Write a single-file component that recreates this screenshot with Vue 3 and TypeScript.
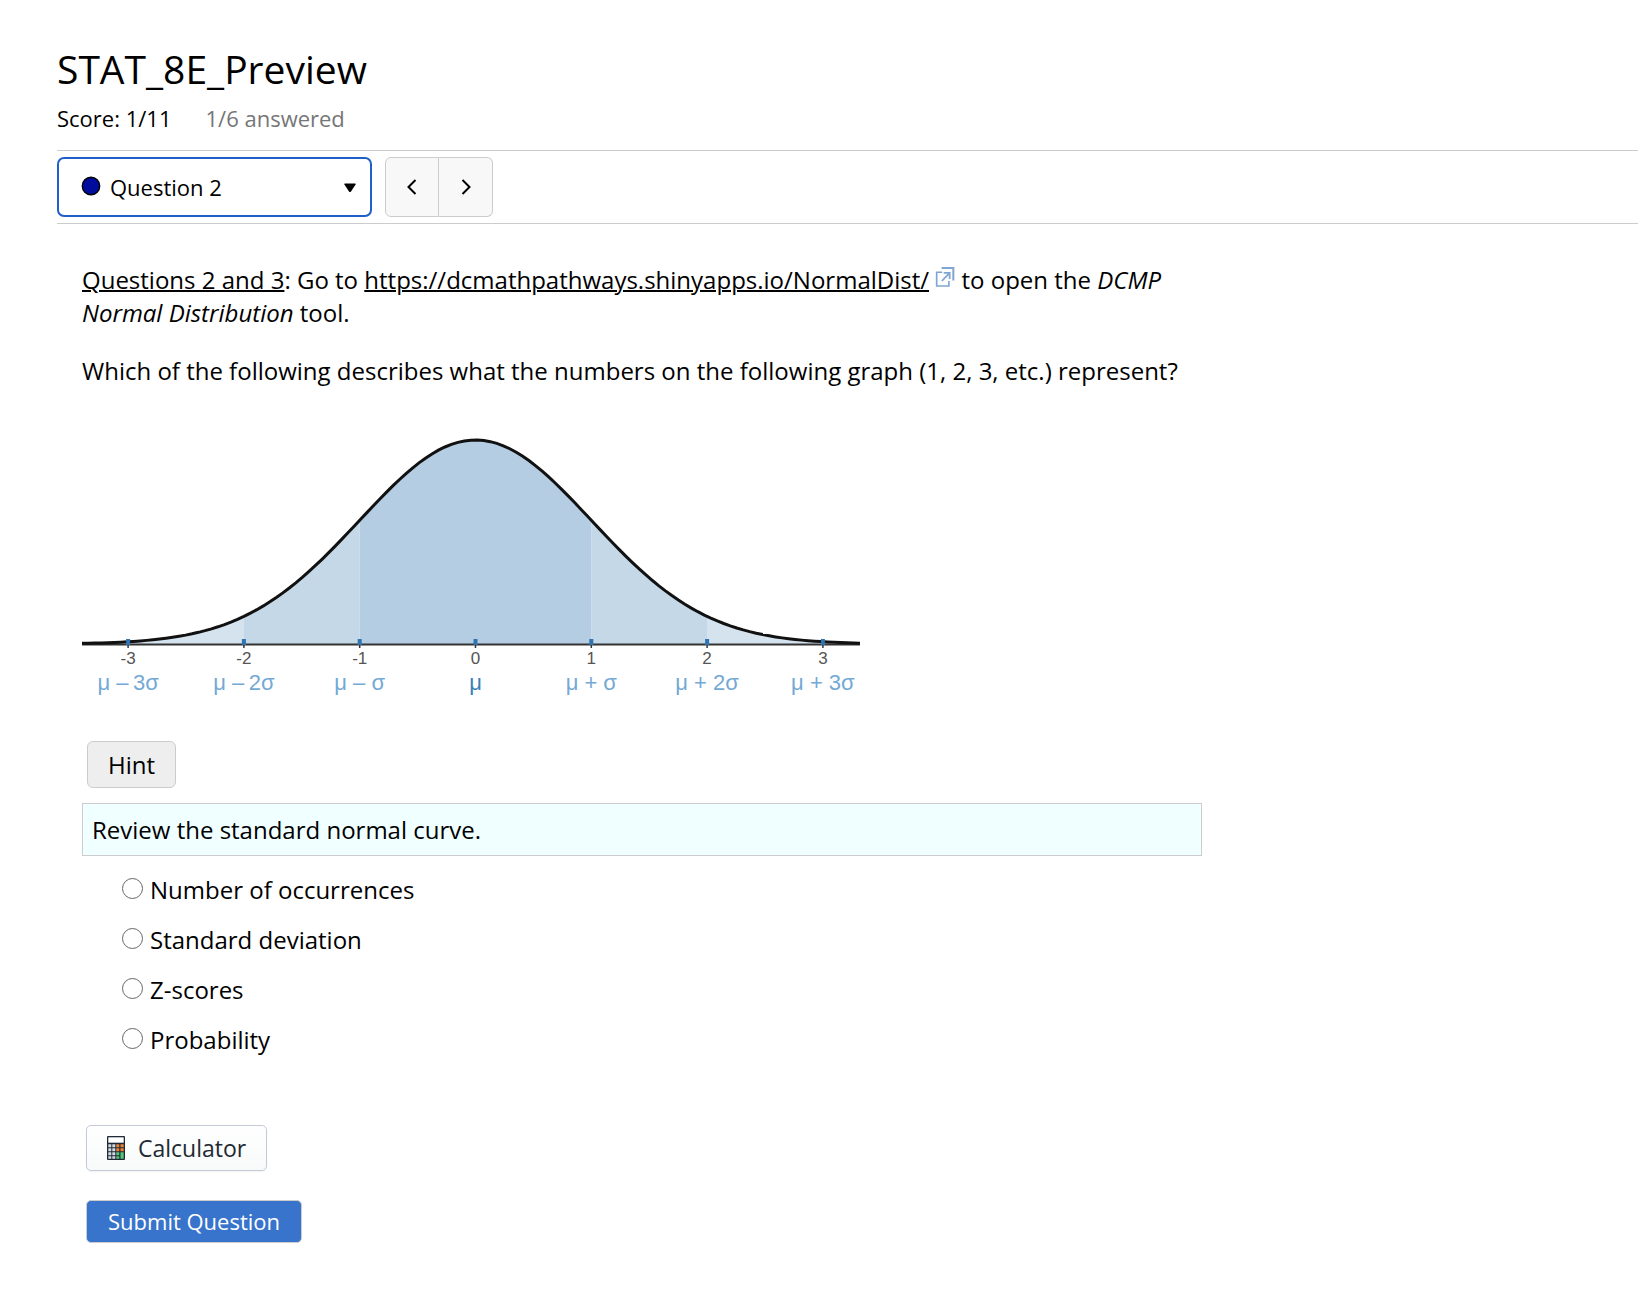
<script setup lang="ts">
import { ref } from 'vue'

interface Tick {
  value: number
  label: string
}

const questions = [1, 2, 3, 4, 5, 6]
const current = ref(2)
const answer = ref('')
const hintOpen = ref(true)
const options = ['Number of occurrences', 'Standard deviation', 'Z-scores', 'Probability']

const ticks: Tick[] = [
  { value: -3, label: 'μ –\u20093σ' },
  { value: -2, label: 'μ –\u20092σ' },
  { value: -1, label: 'μ – σ' },
  { value: 0, label: 'μ' },
  { value: 1, label: 'μ + σ' },
  { value: 2, label: 'μ + 2σ' },
  { value: 3, label: 'μ + 3σ' },
]

// Chart geometry, in viewBox units
const centre = 393.5
const sigma = 115.8
const base = 225
const peak = 204

const toX = (z: number): number => centre + z * sigma
const toY = (z: number): number => base - peak * Math.exp((-z * z) / 2)

function curve(from: number, to: number): string {
  const steps = 120
  const points: string[] = []
  for (let i = 0; i <= steps; i++) {
    const z = from + ((to - from) * i) / steps
    points.push(`${toX(z).toFixed(2)} ${toY(z).toFixed(2)}`)
  }
  return 'M' + points.join('L')
}

function area(from: number, to: number): string {
  return `${curve(from, to)}L${toX(to)} ${base}L${toX(from)} ${base}Z`
}

function step(delta: number): void {
  current.value = Math.min(questions.length, Math.max(1, current.value + delta))
}
</script>

<template>
  <main class="page">
    <header>
      <h1>STAT_8E_Preview</h1>
      <p class="score">
        <span>Score: 1/11</span>
        <span class="answered">1/6 answered</span>
      </p>
    </header>

    <nav class="bar" aria-label="Question navigation">
      <div class="picker">
        <svg class="dot" viewBox="0 0 20 20" aria-hidden="true">
          <circle cx="10" cy="10" r="8.7" fill="#000d9c" stroke="#000" stroke-width="1.4" />
        </svg>
        <select v-model="current" aria-label="Question">
          <option v-for="q in questions" :key="q" :value="q">Question {{ q }}</option>
        </select>
        <svg class="caret" viewBox="0 0 12 10" aria-hidden="true">
          <path d="M1 .5h10q1 0 .6 1L7 8.5q-1 1.200-2 0L.4 1.500Q0 .5 1 .5z" />
        </svg>
      </div>
      <div class="steps">
        <button type="button" aria-label="Previous question" @click="step(-1)">
          <svg viewBox="0 0 20 20" aria-hidden="true"><path d="M13.500 3 6.500 10l7 7" /></svg>
        </button>
        <button type="button" aria-label="Next question" @click="step(1)">
          <svg viewBox="0 0 20 20" aria-hidden="true"><path d="M6.500 3l7 7-7 7" /></svg>
        </button>
      </div>
    </nav>

    <section class="question">
      <p>
        <u>Questions 2 and 3</u>: Go to
        <a href="https://dcmathpathways.shinyapps.io/NormalDist/">https://dcmathpathways.shinyapps.io/NormalDist/</a>{{ ' ' }}
        <svg class="external" viewBox="0 0 18 18" aria-hidden="true">
          <g fill="none" stroke="#7fa6d3">
            <path d="M6 .9h10.500v11.200" stroke-width="1.800" />
            <path d="M6.500 4.700H1.500v12.400h11v-4.500" stroke-width="1.500" />
            <path d="M6.200 12.600 12.300 6.200M7.800 5.300h5.400v5.400" stroke-width="1.600" />
          </g>
        </svg>
        to open the <em>DCMP Normal Distribution</em> tool.
      </p>
      <p>Which of the following describes what the numbers on the following graph (1, 2, 3, etc.) represent?</p>

      <svg class="chart" viewBox="0 0 778 290" role="img" aria-label="Standard normal curve">
        <path :d="area(-3, -2)" fill="#d5e3ef" />
        <path :d="area(2, 3)" fill="#d5e3ef" />
        <path :d="area(-2, -1)" fill="#c5d8e7" />
        <path :d="area(1, 2)" fill="#c5d8e7" />
        <path :d="area(-1, 1)" fill="#b5cde2" />
        <path d="M0 225.500H778" stroke="#333" stroke-width="2" />
        <path :d="curve(-3.4, 3.32)" fill="none" stroke="#111" stroke-width="3" />
        <g v-for="t in ticks" :key="t.value">
          <path :d="`M${toX(t.value)} 224v5`" stroke="#333" stroke-width="1.500" />
          <path :d="`M${toX(t.value)} 220v6`" stroke="#2f74b0" stroke-width="4" />
          <text class="tick" :x="toX(t.value)" y="245">{{ t.value }}</text>
          <text class="mu" :class="{ mean: t.value === 0 }" :x="toX(t.value)" y="271">{{ t.label }}</text>
        </g>
      </svg>

      <button class="hint" type="button" @click="hintOpen = !hintOpen">Hint</button>
      <div v-if="hintOpen" class="hint-text">Review the standard normal curve.</div>

      <ul class="options">
        <li v-for="o in options" :key="o">
          <label><input v-model="answer" type="radio" name="answer" :value="o" />{{ o }}</label>
        </li>
      </ul>

      <div class="actions">
        <button class="calculator" type="button">
          <svg viewBox="0 0 18 24" aria-hidden="true">
            <rect width="18" height="24" rx="1" fill="#1f2a36" />
            <rect x="1.300" y="1.300" width="15.400" height="5.400" fill="#fff" />
            <g fill="#d5dae2">
              <path d="M1.300 8.300h3v3h-3zM5.300 8.300h3v3h-3zM1.300 12.300h3v3h-3zM5.300 12.300h3v3h-3zM1.300 16.300h3v3h-3zM5.300 16.300h3v3h-3zM1.300 20.300h3v2.500h-3zM5.300 20.300h3v2.500h-3z" />
            </g>
            <path d="M9.300 8.300h3v3h-3zM13.500 8.300h3.200v3h-3.200zM9.300 12.300h3v3h-3zM13.500 12.300h3.200v3h-3.200z" fill="#ee8433" />
            <path d="M9.300 16.300h3v3h-3zM9.300 20.300h3v2.500h-3zM13.500 16.300h3.200v6.500h-3.200z" fill="#52c878" />
          </svg>
          Calculator
        </button>
        <button class="submit" type="button">Submit Question</button>
      </div>
    </section>
  </main>
</template>

<style>
body {
  margin: 0;
  background: #fff;
}
</style>

<style scoped>
.page {
  padding: 41px 0 56px 57px;
  font: 24px/33px "Open Sans", "Noto Sans", sans-serif;
  color: #000;
}

h1 {
  margin: 0;
  font-size: 39px;
  font-weight: 400;
  line-height: 56px;
}

.score {
  display: flex;
  gap: 34px;
  margin: 5px 0 15px;
  font-size: 22px;
}

.answered {
  color: #767676;
}

.bar {
  display: flex;
  gap: 13px;
  padding: 6px 0;
  border-top: 1px solid #ccc;
  border-bottom: 1px solid #ccc;
}

.picker {
  position: relative;
  width: 315px;
}

.picker select {
  display: block;
  width: 100%;
  height: 60px;
  padding: 0 48px 0 51px;
  border: 2px solid #1f5fc9;
  border-radius: 7px;
  outline: none;
  background: #fff;
  color: #000;
  font: inherit;
  font-size: 22px;
  appearance: none;
}

.dot,
.caret {
  position: absolute;
  pointer-events: none;
}

.dot {
  left: 24px;
  top: 19px;
  width: 20px;
  height: 20px;
}

.caret {
  right: 16px;
  top: 26px;
  width: 12px;
  height: 10px;
}

.steps {
  display: flex;
}

.steps button {
  display: flex;
  align-items: center;
  justify-content: center;
  width: 54px;
  padding: 0;
  border: 1px solid #ccc;
  background: #f8f8f8;
}

.steps button:first-child {
  border-radius: 6px 0 0 6px;
}

.steps button:last-child {
  border-left: 0;
  border-radius: 0 6px 6px 0;
}

.steps svg {
  width: 20px;
  height: 20px;
  fill: none;
  stroke: #000;
  stroke-width: 2;
}

.question {
  max-width: 1120px;
  margin: 39px 24px 0 25px;
}

.question p {
  margin: 0 0 25px;
}

.question a {
  color: inherit;
}

u,
a {
  text-decoration-thickness: 2px;
}

.external {
  width: 20px;
  height: 20px;
  vertical-align: 2px;
}

.chart {
  display: block;
  width: 100%;
  max-width: 778px;
  margin-top: 32px;
}

.tick,
.mu {
  font-family: "Liberation Sans", Arial, sans-serif;
  text-anchor: middle;
}

.tick {
  font-size: 17px;
  fill: #555;
}

.mu {
  font-size: 22px;
  fill: #74a9d4;
}

.mu.mean {
  fill: #3a7fb8;
}

.hint {
  display: block;
  height: 47px;
  margin: 32px 0 15px 5px;
  padding: 0 20px;
  border: 1px solid #ccc;
  border-radius: 6px;
  background: #eee;
  color: #000;
  font: inherit;
}

.hint-text {
  padding: 9px;
  border: 1px solid #ccc;
  background: #f0ffff;
}

.options {
  display: grid;
  gap: 17px;
  margin: 17px 0 0;
  padding: 0 0 0 40px;
  list-style: none;
}

.options label {
  display: flex;
  gap: 7px;
  width: fit-content;
}

.options input {
  width: 21px;
  height: 21px;
  margin: 5px 0 0;
  border: 1px solid #666;
  border-radius: 50%;
  background: #fff;
  appearance: none;
}

.options input:checked {
  background: radial-gradient(#1f5fc9 50%, #fff 55%);
}

.actions {
  display: flex;
  flex-direction: column;
  align-items: flex-start;
  gap: 29px;
  margin: 69px 0 0 4px;
}

.actions button {
  font: inherit;
  border-radius: 5px;
}

.actions .calculator {
  display: flex;
  align-items: center;
  gap: 13px;
  height: 46px;
  padding: 0 20px;
  border: 1px solid #c4cbd6;
  background: linear-gradient(#fff, #f8fafa);
  box-shadow: 0 1px 2px #0000000d;
  color: #1f2933;
  font-size: 23px;
}

.calculator svg {
  width: 18px;
  height: 24px;
}

.actions .submit {
  height: 43px;
  padding: 0 21px;
  border: 1px solid #ccc;
  background: #3874cb;
  color: #fff;
  font-size: 22px;
}
</style>
